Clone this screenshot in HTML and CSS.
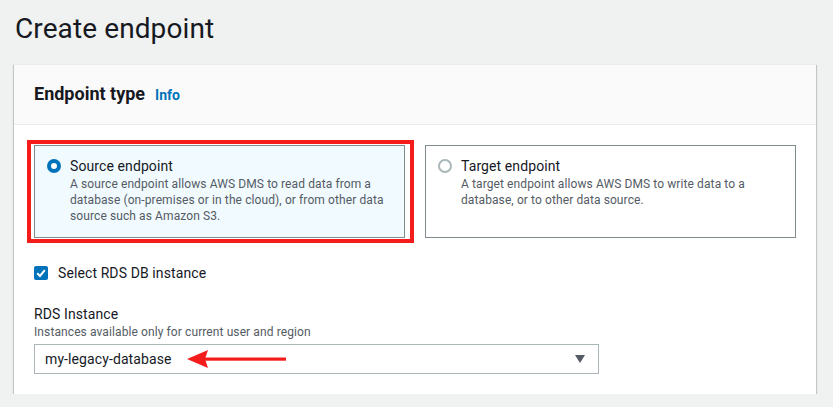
FILE: index.html
```html
<!DOCTYPE html>
<html>
<head>
  <title>Create endpoint</title>
  <link rel="stylesheet" href="styles.css">
</head>
<body>
  <div class="page">
    <h1 class="page-title">Create endpoint</h1>

    <div class="panel">
      <div class="panel-header">
        <h2>Endpoint type</h2>
        <a class="info-link" href="#">Info</a>
      </div>

      <div class="panel-body">
        <div class="tiles">
          <!-- seleccionado -->
          <div class="tile tile-selected annotated">
            <span class="radio radio-checked"></span>
            <div class="tile-text">
              <div class="tile-title">Source endpoint</div>
              <div class="tile-desc">A source endpoint allows AWS DMS to read data from a database (on-premises or in the cloud), or from other data source such as Amazon S3.</div>
            </div>
          </div>

          <div class="tile">
            <span class="radio"></span>
            <div class="tile-text">
              <div class="tile-title">Target endpoint</div>
              <div class="tile-desc">A target endpoint allows AWS DMS to write data to a database, or to other data source.</div>
            </div>
          </div>
        </div>

        <label class="check-row">
          <span class="checkbox">
            <svg width="14" height="14" viewBox="0 0 14 14"><path d="M3.2 7.2 L6 10 L10.8 4.2" fill="none" stroke="#fff" stroke-width="2"/></svg>
          </span>
          Select RDS DB instance
        </label>

        <div class="field">
          <div class="field-label">RDS Instance</div>
          <div class="field-desc">Instances available only for current user and region</div>
          <div class="select">
            <span class="select-value">my-legacy-database</span>
            <span class="caret"></span>
            <svg class="red-arrow" width="100" height="20" viewBox="0 0 100 20">
              <polygon points="0,10 21,1 18,10 21,19" fill="#f51c1c"/>
              <rect x="17" y="8.5" width="82" height="3.2" fill="#f51c1c"/>
            </svg>
          </div>
        </div>
      </div>
    </div>
  </div>
</body>
</html>
```

FILE: styles.css
```css
body {
  margin: 0;
  background: #f0f1f1;
  font-family: Roboto, "Liberation Sans", Arial, sans-serif;
  color: #16191f;
}
.page {
  padding: 11px 17px 0 15px;
}
.page-title {
  margin: 0;
  font-size: 28px;
  line-height: 36px;
  font-weight: 400;
  color: #16191f;
  letter-spacing: 0.1px;
}
.panel {
  margin-top: 17px;
  margin-left: -1px;
  background: #fff;
  border-top: 1px solid #eaeded;
  box-shadow: 0 1px 1px 0 rgba(0, 28, 36, .3), 1px 1px 1px 0 rgba(0, 28, 36, .15), -1px 1px 1px 0 rgba(0, 28, 36, .15);
}
.panel-header {
  display: flex;
  align-items: baseline;
  gap: 10px;
  height: 60px;
  box-sizing: border-box;
  padding: 17px 20px 0 20px;
  background: #fafafa;
  border-bottom: 1px solid #eaeded;
}
.panel-header h2 {
  margin: 0;
  font-size: 18px;
  line-height: 24px;
  font-weight: 700;
}
.info-link {
  font-size: 14px;
  font-weight: 700;
  color: #0073bb;
  text-decoration: none;
}
.panel-body {
  padding: 20px 20px 20px 20px;
}
.tiles {
  display: grid;
  grid-template-columns: 1fr 1fr;
  gap: 20px;
}
.tile {
  position: relative;
  display: flex;
  align-items: flex-start;
  gap: 9px;
  padding: 10px 12px 13px 12px;
  border: 1px solid #7f8c8d;
  background: #fff;
}
.tile-selected {
  background: #f1faff;
}
/* marco rojo de la captura */
.annotated::after {
  content: "";
  position: absolute;
  top: -6px;
  bottom: -6px;
  left: -8px;
  right: -10px;
  border: 4px solid #f51c1c;
}
.radio {
  flex: none;
  width: 14px;
  height: 14px;
  margin-top: 3px;
  box-sizing: border-box;
  border: 2px solid #aab7b8;
  border-radius: 50%;
  background: #fff;
}
.radio-checked {
  border: 4px solid #0073bb;
}
.tile-title {
  font-size: 14px;
  line-height: 20px;
  letter-spacing: 0.1px;
}
.tile-desc {
  font-size: 12px;
  line-height: 16px;
  color: #545b64;
  letter-spacing: 0.1px;
}
.check-row {
  display: flex;
  align-items: center;
  gap: 10px;
  margin-top: 25px;
  font-size: 14px;
  line-height: 20px;
  letter-spacing: 0.1px;
}
.checkbox {
  display: block;
  width: 14px;
  height: 14px;
  border-radius: 2px;
  background: #0073bb;
}
.checkbox svg {
  display: block;
}
.field {
  margin-top: 21px;
}
.field-label {
  font-size: 14px;
  line-height: 20px;
  letter-spacing: 0.1px;
}
.field-desc {
  font-size: 12px;
  line-height: 16px;
  color: #545b64;
  letter-spacing: 0.1px;
}
.select {
  position: relative;
  display: flex;
  align-items: center;
  justify-content: space-between;
  width: 565px;
  height: 30px;
  box-sizing: border-box;
  margin-top: 4px;
  padding: 0 13px 0 10px;
  border: 1px solid #aab7b8;
  font-size: 14px;
  letter-spacing: 0.1px;
}
.caret {
  width: 0;
  height: 0;
  border-left: 5px solid transparent;
  border-right: 5px solid transparent;
  border-top: 8px solid #545b64;
}
.red-arrow {
  position: absolute;
  left: 152px;
  top: 4px;
}
```
